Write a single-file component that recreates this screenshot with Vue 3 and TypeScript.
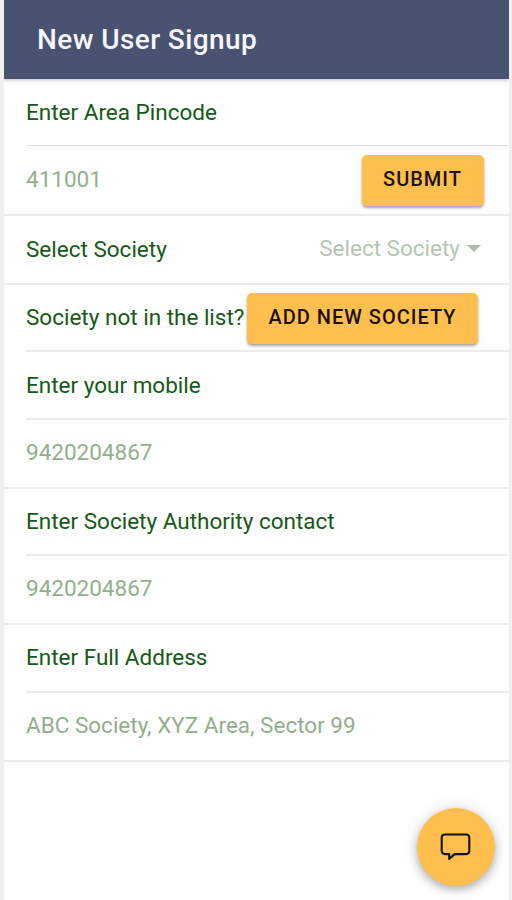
<script setup lang="ts">
import { ref } from 'vue'

const pincode = ref('')
const mobile = ref('')
const authority = ref('')
const address = ref('')
</script>

<template>
  <div class="page">
    <header class="toolbar"><h1>New User Signup</h1></header>
    <form class="list" @submit.prevent>
      <div class="item r1 inset"><label for="pin">Enter Area Pincode</label></div>
      <div class="item r2">
        <input id="pin" v-model="pincode" placeholder="411001" />
        <button class="btn submit" type="submit">SUBMIT</button>
      </div>
      <div class="item r3">
        <span class="label">Select Society</span>
        <span class="select">Select Society<i class="caret"></i></span>
      </div>
      <div class="item r4 inset">
        <span class="label">Society not in the list?</span>
        <button class="btn add" type="button">ADD NEW SOCIETY</button>
      </div>
      <div class="item r5 inset"><label for="mobile">Enter your mobile</label></div>
      <div class="item r6"><input id="mobile" v-model="mobile" placeholder="9420204867" /></div>
      <div class="item r7 inset"><label for="authority">Enter Society Authority contact</label></div>
      <div class="item r8"><input id="authority" v-model="authority" placeholder="9420204867" /></div>
      <div class="item r9 inset"><label for="address">Enter Full Address</label></div>
      <div class="item r10"><input id="address" v-model="address" placeholder="ABC Society, XYZ Area, Sector 99" /></div>
    </form>
    <button class="fab" type="button" aria-label="Chat">
      <svg width="34" height="34" viewBox="0 0 34 34" fill="none" stroke="#17120a" stroke-width="2.1" stroke-linejoin="round">
        <path d="M6 4.5H27Q30.3 4.5 30.3 7.8V20.8Q30.3 24.1 27 24.1H15.6L10.2 29V24.1H6Q2.7 24.1 2.7 20.8V7.8Q2.7 4.5 6 4.5Z" />
      </svg>
    </button>
  </div>
</template>

<style>
body {
  margin: 0;
  background: #fff;
}
</style>

<style scoped>
.page {
  position: relative;
  box-sizing: border-box;
  width: 512px;
  height: 900px;
  overflow: hidden;
  border-left: 4px solid #efefef;
  border-right: 3px solid #f0f0f0;
  background: #fefefe;
  font-family: Roboto, sans-serif;
  font-size: 22.5px;
  color: #155a15;
}
.toolbar {
  display: flex;
  align-items: center;
  box-sizing: border-box;
  height: 79px;
  padding: 1px 0 0 33px;
  background: #4a5272;
  box-shadow: 0 1px 4px rgba(0, 0, 0, 0.25);
}
h1 {
  margin: 0;
  color: #f6f8ff;
  font-size: 28px;
  font-weight: 500;
  line-height: 34px;
  letter-spacing: 0.4px;
}
.item {
  display: flex;
  align-items: center;
  box-sizing: border-box;
  padding-left: 22px;
  border-bottom: 2px solid #ececec;
  line-height: 30px;
  white-space: nowrap;
}
.inset {
  margin-left: 22px;
  padding-left: 0;
}
label {
  padding-bottom: 2px;
}
.r1 {
  height: 67px;
  border-bottom: 1px solid #dfdfdf;
}
.r1 label { padding-bottom: 0; }
.r2 { height: 70px; padding-right: 25px; }
.r3 { height: 69px; padding-right: 28px; }
.r3 .label { padding-bottom: 1px; }
.r4 { height: 67px; }
.r4 .label { padding-bottom: 2px; }
.r5 { height: 68px; }
.r5 label { padding-bottom: 0; }
.r6 { height: 69px; }
.r7 { height: 67px; }
.r8 { height: 69px; }
.r9 { height: 68px; }
.r10 { height: 69px; }
input {
  flex: 1;
  min-width: 0;
  height: 30px;
  padding: 0 0 4px;
  border: 0;
  outline: 0;
  background: transparent;
  color: inherit;
  font: inherit;
}
.r2 input { padding-bottom: 3px; }
input::placeholder {
  color: #94af8c;
  opacity: 1;
}
.select {
  display: flex;
  align-items: center;
  margin-left: auto;
  padding-bottom: 3px;
  color: #b7c5b4;
}
.caret {
  margin-left: 7px;
  border-top: 7px solid #aebbaa;
  border-left: 7px solid transparent;
  border-right: 7px solid transparent;
}
.btn {
  flex: none;
  box-sizing: border-box;
  height: 51px;
  padding: 0 0 3px;
  border: 0;
  border-radius: 5px;
  background: #ffbf4f;
  box-shadow: 0 2px 3px rgba(0, 0, 0, 0.36);
  color: #1b1205;
  font-family: inherit;
  font-size: 20px;
  font-weight: 500;
  letter-spacing: 1px;
}
.submit { width: 122px; padding-right: 1px; }
.add {
  width: 231px;
  margin: 1px 0 0 3px;
  padding-right: 1px;
}
.fab {
  position: absolute;
  top: 808px;
  left: 413px;
  display: flex;
  align-items: center;
  justify-content: center;
  width: 78px;
  height: 78px;
  padding: 0;
  border: 0;
  border-radius: 50%;
  background: #ffbf4f;
  box-shadow: 0 4px 8px rgba(0, 0, 0, 0.26), 0 0 16px rgba(0, 0, 0, 0.1);
}
</style>
